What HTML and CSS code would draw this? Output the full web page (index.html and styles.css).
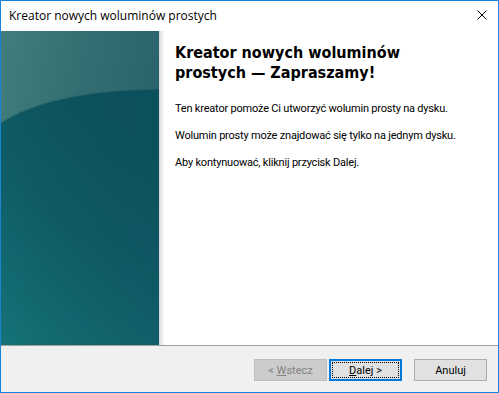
FILE: index.html
```html
<!DOCTYPE html>
<html lang="pl">
<head>
<meta charset="utf-8">
<title>Kreator nowych woluminów prostych</title>
<link rel="stylesheet" href="styles.css">
</head>
<body>
<div class="window">
  <div class="titlebar">
    <span class="title">Kreator nowych woluminów prostych</span>
    <span class="close">
      <svg width="10" height="10" viewBox="0 0 10 10"><path d="M0.5 0.5 L9.5 9.5 M9.5 0.5 L0.5 9.5" stroke="#000" stroke-width="1" fill="none"/></svg>
    </span>
  </div>
  <div class="main">
    <div class="side">
      <svg width="158" height="314" viewBox="0 0 158 314" preserveAspectRatio="none">
        <defs>
          <linearGradient id="topg" x1="0" y1="0" x2="1" y2="0.6">
            <stop offset="0" stop-color="#427d7e"/>
            <stop offset="1" stop-color="#2a676d"/>
          </linearGradient>
          <linearGradient id="botg" x1="0.4" y1="0" x2="0" y2="1">
            <stop offset="0" stop-color="#0c5560"/>
            <stop offset="0.45" stop-color="#0f5e68"/>
            <stop offset="1" stop-color="#157378"/>
          </linearGradient>
          <linearGradient id="rightg" x1="0" y1="0" x2="1" y2="0">
            <stop offset="0" stop-color="#000" stop-opacity="0"/>
            <stop offset="1" stop-color="#0a2d4a" stop-opacity="0.12"/>
          </linearGradient>
        </defs>
        <rect x="0" y="0" width="158" height="314" fill="url(#topg)"/>
        <path d="M0 92 C30 72 80 59 158 58 L158 314 L0 314 Z" fill="url(#botg)"/>
        <path d="M0 92 C30 72 80 59 158 58" stroke="#2f6d72" stroke-width="1.5" fill="none" opacity="0.5"/>
        <rect x="0" y="0" width="158" height="314" fill="url(#rightg)"/>
      </svg>
    </div>
    <div class="shadow"></div>
    <div class="content">
      <h1 class="heading">Kreator nowych woluminów prostych — Zapraszamy!</h1>
      <p class="text">Ten kreator pomoże Ci utworzyć wolumin prosty na dysku.</p>
      <p class="text">Wolumin prosty może znajdować się tylko na jednym dysku.</p>
      <p class="text">Aby kontynuować, kliknij przycisk Dalej.</p>
    </div>
  </div>
  <div class="footer">
    <button class="btn disabled" type="button"><span class="label">&lt; <u>W</u>stecz</span></button>
    <button class="btn default" type="button"><span class="focus"><span class="label"><u>D</u>alej &gt;</span></span></button>
    <button class="btn cancel" type="button"><span class="label">Anuluj</span></button>
  </div>
</div>
</body>
</html>
```

FILE: styles.css
```css
html, body {
  margin: 0;
  padding: 0;
  background: #ffffff;
}

.window {
  width: 499px;
  height: 393px;
  box-sizing: border-box;
  border: 1px solid #1883d7;
  display: flex;
  flex-direction: column;
  background: #ffffff;
  overflow: hidden;
}

.titlebar {
  height: 30px;
  flex: none;
  display: flex;
  align-items: center;
  justify-content: space-between;
  padding-left: 8px;
  padding-right: 11px;
  background: #ffffff;
}

.title {
  font-family: "Open Sans", "Noto Sans", sans-serif;
  font-size: 12px;
  color: #000000;
  position: relative;
  top: -1px;
}

.close {
  display: flex;
  width: 10px;
  height: 10px;
  position: relative;
  top: -1px;
}

.main {
  height: 314px;
  flex: none;
  display: flex;
}

.side {
  width: 158px;
  height: 314px;
  flex: none;
}

.side svg {
  display: block;
}

.shadow {
  width: 6px;
  flex: none;
  background: linear-gradient(to right, #d4d4d4, #eeeeee 50%, #ffffff);
}

.content {
  flex: 1;
  padding: 12px 10px 0 10px;
}

.heading {
  margin: 0;
  max-width: 290px;
  font-family: "DejaVu Sans Condensed", "DejaVu Sans", Verdana, sans-serif;
  font-stretch: condensed;
  font-weight: bold;
  font-size: 16px;
  line-height: 20px;
  color: #000000;
}

.text {
  margin: 0;
  font-family: Roboto, "Liberation Sans", Arial, sans-serif;
  font-size: 11px;
  letter-spacing: -0.2px;
  line-height: 14px;
  color: #000000;
  white-space: nowrap;
}

.heading + .text {
  margin-top: 19px;
}

.text + .text {
  margin-top: 13px;
}

.footer {
  flex: 1;
  border-top: 1px solid #a0a0a0;
  background: #f0f0f0;
  display: flex;
  justify-content: flex-end;
  align-items: flex-start;
  padding: 13px 11px 0 0;
}

.btn {
  width: 73px;
  height: 22px;
  box-sizing: border-box;
  margin: 0;
  padding: 0;
  font-family: Roboto, "Liberation Sans", Arial, sans-serif;
  font-size: 11px;
  color: #000000;
  background: #e1e1e1;
  border: 1px solid #adadad;
  display: flex;
  align-items: center;
  justify-content: center;
}

.label {
  white-space: pre;
}

.btn u {
  text-decoration: underline;
  text-underline-offset: 1px;
}

.disabled {
  background: #cccccc;
  border-color: #bfbfbf;
  color: #838383;
}

.default {
  margin-left: 2px;
  border: 2px solid #0078d7;
  padding: 1px;
}

.default .focus {
  flex: 1;
  align-self: stretch;
  display: flex;
  align-items: center;
  justify-content: center;
  border: 1px dotted #000000;
}

.cancel {
  margin-left: 12px;
}
```
